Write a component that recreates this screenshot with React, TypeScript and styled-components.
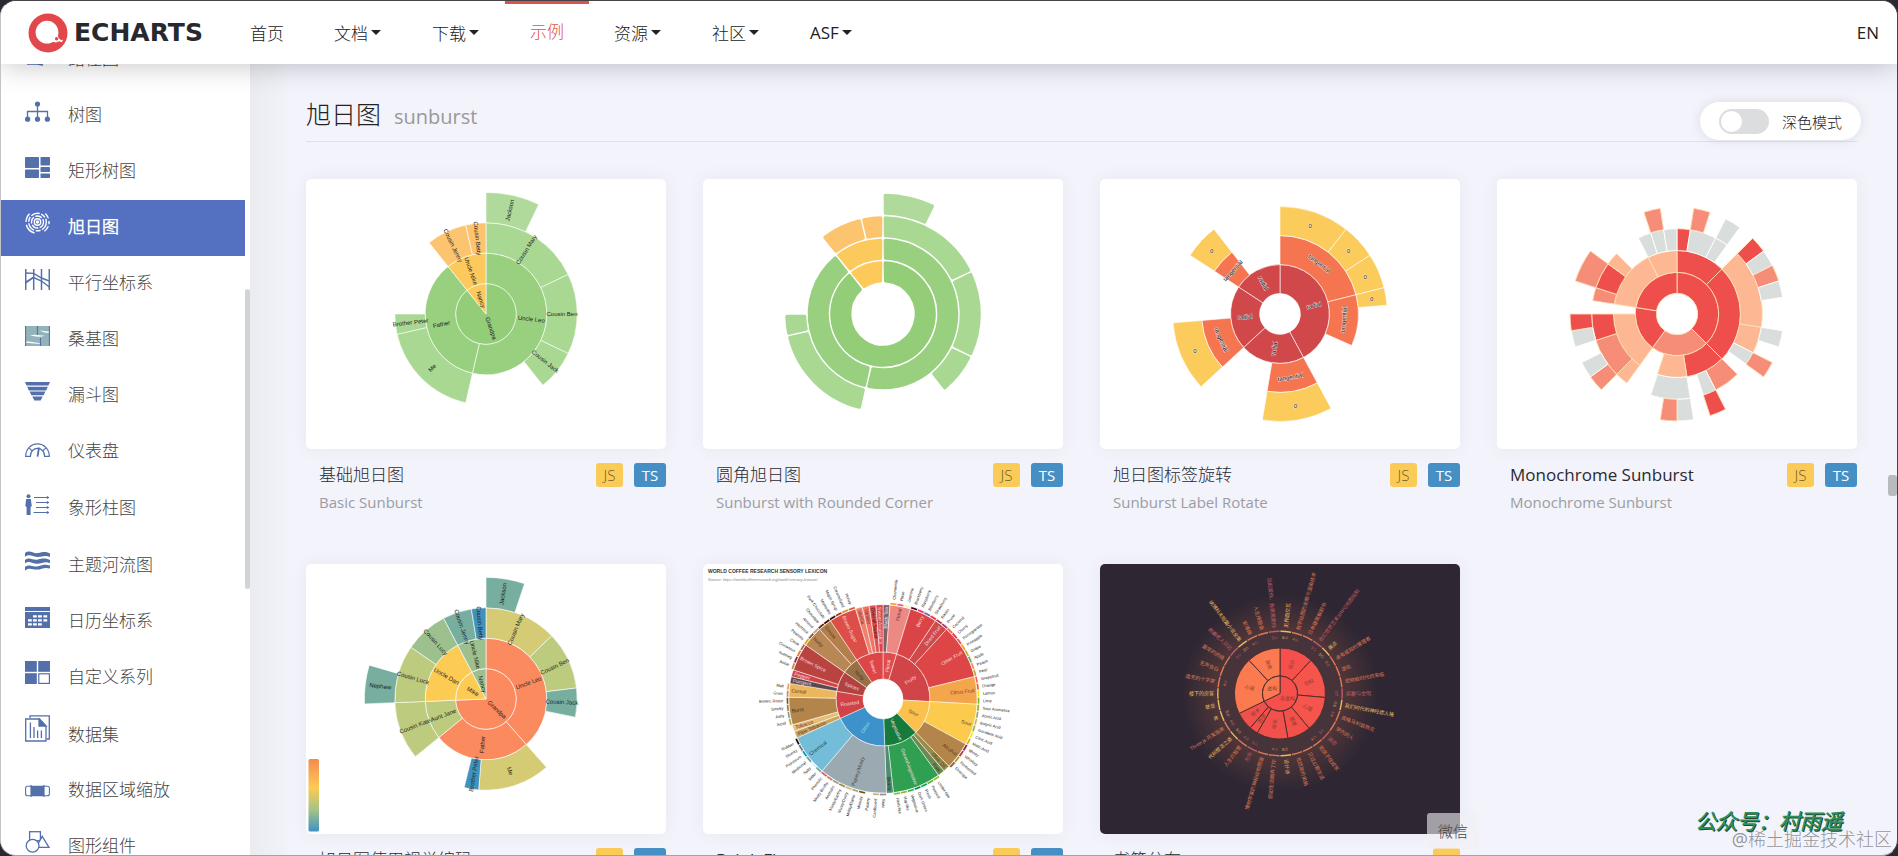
import React from 'react';
import styled, { createGlobalStyle, css } from 'styled-components';

const FONT = '"Open Sans", "Noto Sans CJK SC Light", "Noto Sans CJK SC", sans-serif';
const CHART_FONT = '"Liberation Sans", "Noto Sans CJK SC", sans-serif';

const GlobalStyle = createGlobalStyle`
  *, *::before, *::after { box-sizing: border-box; }
  body { margin: 0; background: #2b2830; font-family: ${FONT}; color: #2c343c; }
  a { color: inherit; text-decoration: none; }
  h1, h2, h3, p { margin: 0; font-weight: 400; }
`;

/* ---------- sunburst drawing ---------- */

type Node = { n?: string; v?: number; f?: string; lab?: string; c?: Node[] };
type Arc = { d: number; a: number; b: number; node: Node; root: number };

const valueOf = (x: Node): number => x.v ?? (x.c ?? []).reduce((s, k) => s + valueOf(k), 0);

function layout(data: Node[]): Arc[] {
  const unit = 360 / data.reduce((s, x) => s + valueOf(x), 0);
  const out: Arc[] = [];
  const walk = (list: Node[], start: number, d: number, root: number) => {
    let a = start;
    list.forEach((node, i) => {
      const b = a + valueOf(node) * unit;
      const r = d === 0 ? i : root;
      out.push({ d, a, b, node, root: r });
      if (node.c) walk(node.c, a, d + 1, r);
      a = b;
    });
  };
  walk(data, 0, 0, 0);
  return out;
}

const CX = 180;
const point = (r: number, deg: number, cy = 135): [number, number] => {
  const t = (deg * Math.PI) / 180;
  return [CX + r * Math.sin(t), cy - r * Math.cos(t)];
};
const str = (p: [number, number]) => `${p[0].toFixed(2)} ${p[1].toFixed(2)}`;

function sector(r0: number, r1: number, a: number, b: number, cy = 135, inset = 0) {
  const i0 = inset ? (inset / r0) * (180 / Math.PI) : 0;
  const i1 = inset ? (inset / r1) * (180 / Math.PI) : 0;
  const q0 = r0 + inset;
  const q1 = r1 - inset;
  const large = b - a > 180 ? 1 : 0;
  const outer = `M${str(point(q1, a + i1, cy))}A${q1} ${q1} 0 ${large} 1 ${str(point(q1, b - i1, cy))}`;
  if (r0 === 0) return `${outer}L${CX} ${cy}Z`;
  return `${outer}L${str(point(q0, b - i0, cy))}A${q0} ${q0} 0 ${large} 0 ${str(point(q0, a + i0, cy))}Z`;
}

const ChartSvg = styled.svg`
  display: block;
  width: 100%;
  height: auto;
  font-family: ${CHART_FONT};
`;

type LabelProps = {
  r: number;
  deg: number;
  size: number;
  fill: string;
  text: string;
  mode?: 'radial' | 'tangential' | 'flat';
  place?: 'middle' | 'out' | 'in';
  cy?: number;
  halo?: boolean;
};

function Label({ r, deg, size, fill, text, mode = 'radial', place = 'middle', cy = 135, halo }: LabelProps) {
  const [x, y] = point(r, deg, cy);
  let rot = 0;
  if (mode === 'radial') rot = deg <= 180 ? deg - 90 : deg + 90;
  if (mode === 'tangential') rot = deg > 90 && deg < 270 ? deg - 180 : deg;
  const anchor = place === 'middle' ? 'middle' : (place === 'out') === deg <= 180 ? 'start' : 'end';
  return (
    <text
      x={x}
      y={y}
      dy="0.35em"
      fontSize={size}
      fill={fill}
      textAnchor={anchor}
      transform={`rotate(${rot} ${x} ${y})`}
      stroke={halo ? '#fff' : undefined}
      strokeWidth={halo ? 1 : undefined}
      strokeOpacity={halo ? 0.6 : undefined}
      paintOrder="stroke"
    >
      {text}
    </text>
  );
}

/* family tree, plain and rounded */

const FAMILY: Node[] = [
  {
    n: 'Grandpa',
    c: [
      {
        n: 'Uncle Leo',
        v: 15,
        c: [
          { n: 'Cousin Mary', v: 5, c: [{ n: 'Jackson', v: 2 }] },
          { n: 'Cousin Ben', v: 4 },
          { n: 'Cousin Jack', v: 2 },
        ],
      },
      { n: 'Father', v: 10, c: [{ n: 'Me', v: 5 }, { n: 'Brother Peter', v: 1 }] },
    ],
  },
  { n: 'Nancy', c: [{ n: 'Uncle Nike', c: [{ n: 'Cousin Jenny', v: 2 }, { n: 'Cousin Betty', v: 1 }] }] },
];
const FAMILY_COLORS = [
  ['#93cd77', '#99d07f', '#a9d892', '#b0da9b'],
  ['#fcc95a', '#fcc95d', '#fdc470', '#fdc470'],
];

function BasicSunburst() {
  const step = 30.4;
  const arcs = layout(FAMILY);
  return (
    <ChartSvg viewBox="0 0 360 270" role="img" aria-label="Basic Sunburst">
      {arcs.map((s, i) => (
        <path key={i} d={sector(s.d * step, (s.d + 1) * step, s.a, s.b)} fill={FAMILY_COLORS[s.root][s.d]} stroke="#fff" strokeWidth={0.6} />
      ))}
      {arcs.map((s, i) => (
        <Label key={i} r={(s.d + 0.5) * step} deg={(s.a + s.b) / 2} size={6} fill="#222" text={s.node.n!} />
      ))}
    </ChartSvg>
  );
}

function RoundedSunburst() {
  const step = 22.5;
  return (
    <ChartSvg viewBox="0 0 360 270" role="img" aria-label="Sunburst with Rounded Corner">
      {layout(FAMILY).map((s, i) => {
        const color = FAMILY_COLORS[s.root][s.d];
        return (
          <path
            key={i}
            d={sector(31 + s.d * step, 31 + (s.d + 1) * step, s.a, s.b, 135, 2.4)}
            fill={color}
            stroke={color}
            strokeWidth={3.4}
            strokeLinejoin="round"
          />
        );
      })}
    </ChartSvg>
  );
}

/* label rotation */

const ROTATE: Node[] = [
  {
    v: 8,
    c: [
      { v: 4, c: [{ v: 2 }, { v: 1 }, { v: 1 }] },
      { v: 2, c: [{ v: 0.5 }] },
    ],
  },
  { v: 4, c: [{ v: 2, c: [{ v: 2 }] }] },
  { v: 4, c: [{ v: 2, c: [{ v: 2 }] }] },
  { v: 3, c: [{ v: 1, c: [{ v: 1 }] }] },
];

function RotateSunburst() {
  const colors = ['#d0484a', '#f57551', '#fbcb5b'];
  const arcs = layout(ROTATE);
  return (
    <ChartSvg viewBox="0 0 360 270" role="img" aria-label="Sunburst Label Rotate">
      {arcs.map((s, i) => (
        <path key={i} d={sector(20.4 + s.d * 29, 49.4 + s.d * 29, s.a, s.b)} fill={colors[s.d]} stroke="#fff" strokeWidth={0.6} />
      ))}
      {arcs.map((s, i) => (
        <Label
          key={i}
          r={35 + s.d * 29}
          deg={(s.a + s.b) / 2}
          size={6}
          fill="#222"
          halo
          mode={(['radial', 'tangential', 'flat'] as const)[s.d]}
          text={['radial', 'tangential', '0'][s.d]}
        />
      ))}
    </ChartSvg>
  );
}

/* monochrome */

const RED = '#ef4f4c';
const SALMON = '#f68d79';
const PEACH = '#fdb893';
const MONO: Node[] = [
  {
    f: RED,
    c: [
      { v: 5, f: RED, c: [{ v: 1, f: RED }, { v: 2, c: [{ v: 1, f: SALMON }] }, { v: 1, c: [{ v: 1 }] }] },
      {
        v: 10,
        f: RED,
        c: [
          { v: 6, f: PEACH, c: [{ v: 1, f: RED }, { v: 1 }, { v: 1, f: SALMON }, { v: 1 }] },
          { v: 2, f: PEACH, c: [{ v: 1 }] },
          { c: [{ v: 1, f: SALMON }] },
        ],
      },
    ],
  },
  {
    v: 9,
    f: SALMON,
    c: [
      { v: 4, f: RED, c: [{ v: 2, f: SALMON }, { c: [{ v: 1, f: RED }] }] },
      { f: PEACH, c: [{ v: 3, c: [{ v: 1 }, { v: 1, f: SALMON }] }] },
    ],
  },
  {
    v: 7,
    f: RED,
    c: [
      {
        f: PEACH,
        c: [
          { v: 1, f: PEACH },
          { v: 3, f: SALMON, c: [{ v: 1, f: SALMON }, { v: 1 }] },
          { v: 2, f: RED, c: [{ v: 1 }, { v: 1, f: RED }] },
        ],
      },
    ],
  },
  {
    f: RED,
    c: [
      { v: 6, f: PEACH, c: [{ v: 1, f: SALMON }, { v: 2, f: RED, c: [{ v: 2, f: SALMON }] }, { v: 1, f: PEACH }] },
      { v: 3, f: PEACH, c: [{ v: 1 }, { c: [{ v: 1, f: SALMON }] }, { v: 1 }] },
    ],
  },
];

function MonochromeSunburst() {
  const r = [20.7, 41.7, 63.5, 85.3, 107];
  return (
    <ChartSvg viewBox="0 0 360 270" role="img" aria-label="Monochrome Sunburst">
      {layout(MONO).map((s, i) => (
        <path
          key={i}
          d={sector(r[s.d], r[s.d + 1], s.a, s.b)}
          fill={s.node.f ?? '#d9dedd'}
          stroke={s.node.f ? '#fde0b8' : '#fff'}
          strokeWidth={0.9}
        />
      ))}
    </ChartSvg>
  );
}

/* visual encoding */

const VALUE_COLORS: Record<number, string> = {
  1: '#3f92bd', 2: '#77ae9f', 3: '#9cc18f', 4: '#bccb7d', 5: '#d5cb74', 7: '#fccb54', 10: '#fb8a5f',
};
const KIN: Node[] = [
  {
    n: 'Grandpa',
    c: [
      FAMILY[0].c![0],
      { n: 'Father', v: 10, c: [{ n: 'Me', v: 5 }, { n: 'Brother Peter', v: 1 }] },
      { n: 'Aunt Jane', c: [{ n: 'Cousin Kate', v: 4 }] },
    ],
  },
  {
    n: 'Mike',
    c: [{ n: 'Uncle Dan', c: [{ n: 'Cousin Luck', v: 4, c: [{ n: 'Nephew', v: 2 }] }, { n: 'Cousin Lucy', v: 3 }] }],
  },
  FAMILY[1],
];

function VisualMapSunburst() {
  const step = 30.4;
  const arcs = layout(KIN);
  return (
    <ChartSvg viewBox="0 0 360 270" role="img" aria-label="Sunburst VisualMap">
      <defs>
        <linearGradient id="scale" x1="0" y1="0" x2="0" y2="1">
          <stop offset="0" stopColor="#f58a52" />
          <stop offset="0.4" stopColor="#fbcb52" />
          <stop offset="0.7" stopColor="#a5c388" />
          <stop offset="1" stopColor="#3f92c4" />
        </linearGradient>
      </defs>
      {arcs.map((s, i) => (
        <path
          key={i}
          d={sector(s.d * step, (s.d + 1) * step, s.a, s.b)}
          fill={VALUE_COLORS[Math.min(10, valueOf(s.node))]}
          stroke="#fff"
          strokeWidth={0.6}
        />
      ))}
      {arcs.map((s, i) => (
        <Label key={i} r={(s.d + 0.5) * step} deg={(s.a + s.b) / 2} size={6} fill="#222" text={s.node.n!} />
      ))}
      <rect x="2.5" y="195" width="10.5" height="72.5" rx="1.5" fill="url(#scale)" />
    </ChartSvg>
  );
}

/* coffee flavours */

const leaves = (names: string, colors: string): Node[] => {
  const fills = colors.split(' ');
  return names.split('|').map((n, i) => ({ n, v: 1, f: fills[i % fills.length] }));
};

const FLAVORS: Node[] = [
  {
    n: 'Floral', f: '#de4c4b',
    c: [
      { n: 'Black Tea', v: 1, f: '#7d6168', lab: '#eee' },
      { n: 'Floral', f: '#ec8983', lab: '#733', c: leaves('Chamomile|Rose|Jasmine', '#f99e1c #ef5a78 #f7f1bd') },
    ],
  },
  {
    n: 'Fruity', f: '#d14548',
    c: [
      { n: 'Berry', f: '#db4446', c: leaves('Blackberry|Raspberry|Blueberry|Strawberry', '#3e0317 #e62969 #6569b0 #ef2d36') },
      { n: 'Dried Fruit', f: '#cf4a48', c: leaves('Raisin|Prune', '#b53b54 #a5446f') },
      {
        n: 'Other Fruit', f: '#dd4547',
        c: leaves('Coconut|Cherry|Pomegranate|Pineapple|Grape|Apple|Peach|Pear', '#f2684b #e73451 #e65656 #f89a1c #aeb92c #4eb849 #f68a5c #baa635'),
      },
      { n: 'Citrus Fruit', f: '#f3a64c', lab: '#933', c: leaves('Grapefruit|Orange|Lemon|Lime', '#f26355 #e2631e #fde404 #7eb138') },
    ],
  },
  {
    n: 'Sour', f: '#fbc14c', lab: '#643',
    c: [
      {
        n: 'Sour', f: '#fccb4e', lab: '#643',
        c: leaves('Sour Aromatics|Acetic Acid|Butyric Acid|Isovaleric Acid|Citric Acid|Malic Acid', '#9ea718 #94a76f #d0b24f #8eb646 #faef07 #c1ba07'),
      },
      { n: 'Alcohol', f: '#b3854a', lab: '#532', c: leaves('Winey|Whiskey|Fermented|Overripe', '#8f1c53 #b34039 #ba9232 #8b6439') },
    ],
  },
  {
    n: 'Vegetative', f: '#157a3c',
    c: [
      { n: 'Olive Oil', v: 1, f: '#9a8a4c', lab: '#343' },
      { n: 'Raw', v: 1, f: '#6b8a50', lab: '#343' },
      {
        n: 'Green/Vegetative', f: '#2f9f52',
        c: leaves('Under-ripe|Peapod|Fresh|Dark Green|Vegetative|Hay-like|Herb-like', '#a2bb2b #62aa3c #03a653 #038549 #28b44b #a3a830 #7ac141'),
      },
      { n: 'Beany', v: 1, f: '#4f8d72', lab: '#232' },
    ],
  },
  {
    n: 'Other', f: '#3d92cb', lab: '#7fe0e8',
    c: [
      {
        n: 'Papery/Musty', f: '#9ba9b1', lab: '#444',
        c: leaves(
          'Stale|Cardboard|Papery|Woody|Moldy/Damp|Musty/Dusty|Musty/Earthy|Animalic|Meaty Brothy|Phenolic',
          '#8b8c90 #beb276 #fefef4 #744e03 #a3a36f #c9b583 #978847 #9d977f #cc7b6a #db646a',
        ),
      },
      { n: 'Chemical', f: '#73bdd8', lab: '#246', c: leaves('Bitter|Salty|Medicinal|Petroleum|Skunky|Rubber', '#80a89d #def2fd #7a9bae #039fb8 #5e777b #120c0c') },
    ],
  },
  {
    n: 'Roasted', f: '#d14347',
    c: [
      { n: 'Pipe Tobacco', v: 1, f: '#caa45c', lab: '#533' },
      { n: 'Tobacco', v: 1, f: '#e5bd74', lab: '#533' },
      { n: 'Burnt', f: '#b3854a', lab: '#432', c: leaves('Acrid|Ashy|Smoky|Brown, Roast', '#b9a449 #899893 #a1743b #894810') },
      { n: 'Cereal', f: '#ebb65c', lab: '#533', c: leaves('Grain|Malt', '#b7906f #eb9d5f') },
    ],
  },
  {
    n: 'Spices', f: '#b2423f',
    c: [
      { n: 'Pungent', v: 1, f: '#5b4a4c' },
      { n: 'Pepper', v: 1, f: '#d14347' },
      { n: 'Brown Spice', f: '#b8433f', c: leaves('Anise|Nutmeg|Cinnamon|Clove', '#c78936 #8c292c #e5762e #a16c5a') },
    ],
  },
  {
    n: 'Nutty', f: '#987048', lab: '#432',
    c: [
      { n: 'Nutty', f: '#b98756', lab: '#532', c: leaves('Peanuts|Hazelnut|Almond', '#d4ad12 #9d5433 #c89f83') },
      { n: 'Cocoa', f: '#b57f4c', lab: '#532', c: leaves('Chocolate|Dark Chocolate', '#692a19 #470604') },
    ],
  },
  {
    n: 'Sweet', f: '#dd4547',
    c: [
      { n: 'Brown Sugar', f: '#dc4e48', c: leaves('Molasses|Maple Syrup|Caramelized|Honey', '#310d0f #ae341f #d78823 #da5c1f') },
      { n: 'Vanilla', v: 1, f: '#f0816f', lab: '#733' },
      { n: 'Vanillin', v: 1, f: '#ee7468', lab: '#733' },
      { n: 'Overall Sweet', v: 1, f: '#e0504c', lab: '#411' },
      { n: 'Sweet Aromatics', v: 1, f: '#dc4547' },
    ],
  },
];

function FlavorSunburst() {
  const rings = [[20, 47], [47, 94.3], [94.3, 96.8]];
  const arcs = layout(FLAVORS);
  return (
    <ChartSvg viewBox="0 0 360 270" role="img" aria-label="Drink Flavors">
      <text x="5" y="9" fontSize="5" fontWeight="700" fill="#333">WORLD COFFEE RESEARCH SENSORY LEXICON</text>
      <text x="5" y="17" fontSize="4" fontStyle="italic" fill="#888">Source: https://worldcoffeeresearch.org/work/sensory-lexicon/</text>
      {arcs.map((s, i) => (
        <path key={i} d={sector(rings[s.d][0], rings[s.d][1], s.a, s.b)} fill={s.node.f} stroke="#fff" strokeWidth={s.d === 2 ? 0.8 : 0.5} />
      ))}
      {arcs.map((s, i) => {
        const mid = (s.a + s.b) / 2;
        if (s.d === 2) return <Label key={i} r={100} deg={mid} size={4} fill="#222" text={s.node.n!} place="out" />;
        if (s.d === 1) return <Label key={i} r={92} deg={mid} size={5} fill={s.node.lab ?? '#fbdcdc'} text={s.node.n!} place="in" />;
        return <Label key={i} r={33.5} deg={mid} size={5} fill={s.node.lab ?? '#fbdcdc'} text={s.node.n!} />;
      })}
    </ChartSvg>
  );
}

/* book collection */

const BOOK_COLORS: Record<number, string> = { 5: '#ecb862', 4: '#df7a55', 3: '#c45c66' };
const GENRES: [string, number, number, string][] = [
  ['设计', 0, 43, '#f5504c'], ['社科', 43, 95, '#f5554c'], ['心理', 95, 140, '#f5554c'], ['居家', 140, 170, '#f25048'],
  ['绘本', 170, 210, '#f2504c'], ['哲学', 210, 221, '#f2504c'], ['技术', 221, 244, '#f2504c'], ['小说', 244, 317, '#fb7a50'],
  ['其他', 317, 360, '#fb7a50'],
];
const BOOKS: [string, number][] = [
  ['无界面交互', 5], ['数字绘图的光照与渲染技术', 4], ['日本建筑解剖书', 4], ['奇幻世界艺术&RPG地图绘制', 3], ['痛点', 5],
  ['卓有成效的管理者', 4], ['进化', 4], ['后物欲时代的来临', 4], ['疯癫与文明', 3], ['我们时代的神经症人格', 5],
  ['皮格马利翁效应', 4], ['受伤的人', 4], ['迷恋', 3], ['把房子住成家', 4], ['只过必要生活', 4], ['北欧简约风格', 4],
  ['设计诗', 5], ['假如生活糊弄了你', 4], ['博物学家的神秘动物图鉴', 4], ['方向', 3], ['人生的智慧', 4], ['代码整洁之道', 5],
  ['Three.js 开发指南', 4], ['疼', 5], ['慈悲', 5], ['楼下的房客', 5], ['虚无的十字架', 4], ['无声告白', 4], ['童年的终结', 4],
  ['疯癫老人日记', 3], ['纳博科夫短篇小说全集', 5], ['安魂曲', 4], ['人生拼图版', 4], ['比起爱你，我更需要你', 3],
];

function BookSunburst() {
  const cy = 129.5;
  const unit = 360 / BOOKS.length;
  return (
    <ChartSvg viewBox="0 0 360 270" role="img" aria-label="Book Records">
      <defs>
        <radialGradient id="glow" cx="0.5" cy="0.5" r="0.5">
          <stop offset="0.6" stopColor="#d9714f" stopOpacity="0.22" />
          <stop offset="1" stopColor="#d9714f" stopOpacity="0" />
        </radialGradient>
      </defs>
      <rect width="360" height="270" fill="#2e2733" />
      <circle cx={CX} cy={cy} r="98" fill="url(#glow)" />
      <circle cx={CX} cy={cy} r="62" fill="#46343a" />
      {BOOKS.map(([name, stars], i) => {
        const a = i * unit;
        const mid = a + unit / 2;
        return (
          <g key={name}>
            <path d={sector(61.5, 62.9, a + 0.4, a + unit - 0.4, cy)} fill={BOOK_COLORS[stars]} />
            <Label r={66} deg={mid} size={5} fill={BOOK_COLORS[stars]} text={name} place="out" cy={cy} />
            {(i === 0 || BOOKS[i - 1][1] !== stars) && (
              <Label r={56} deg={mid} size={4} fill={BOOK_COLORS[stars]} text={`${stars}☆`} mode="tangential" cy={cy} />
            )}
          </g>
        );
      })}
      {GENRES.map(([name, a, b, fill]) => (
        <g key={name}>
          <path d={sector(17.7, 45.5, a, b, cy)} fill={fill} stroke="#4a2b30" strokeWidth={0.9} />
          <Label r={31} deg={(a + b) / 2} size={5} fill="#8a3a2c" text={name} cy={cy} />
        </g>
      ))}
      <path d={sector(0, 17.5, 0, 244, cy)} fill="#f5504c" stroke="#4a2b30" strokeWidth={0.9} />
      <path d={sector(0, 17.5, 244, 360, cy)} fill="#fb7a50" stroke="#4a2b30" strokeWidth={0.9} />
      <Label r={9} deg={122} size={5} fill="#8a3a2c" text="非虚构" mode="flat" cy={cy} />
      <Label r={9} deg={302} size={5} fill="#8a3a2c" text="虚构" mode="flat" cy={cy} />
    </ChartSvg>
  );
}

/* ---------- sidebar icons ---------- */

const BLUE = '#5470ab';

const icons: Record<string, { h: number; art: React.ReactNode }> = {
  lines: {
    h: 16,
    art: <path d="M2 14H12L18 15" fill="none" stroke={BLUE} strokeWidth="1.5" />,
  },
  tree: {
    h: 21,
    art: (
      <>
        <path d="M12.5 3V18M2.5 17V10.5H22.5V17" fill="none" stroke={BLUE} strokeWidth="1.3" />
        <circle cx="12.5" cy="3" r="2.6" fill={BLUE} />
        <circle cx="2.6" cy="18.2" r="2.6" fill={BLUE} />
        <circle cx="12.5" cy="18.2" r="2.6" fill={BLUE} />
        <circle cx="22.4" cy="18.2" r="2.6" fill={BLUE} />
      </>
    ),
  },
  treemap: {
    h: 21,
    art: (
      <g fill={BLUE}>
        <rect width="14" height="11" rx="0.8" />
        <rect y="12.5" width="14" height="8.5" rx="0.8" />
        <rect x="15.5" width="9.5" height="8.5" rx="0.8" />
        <rect x="15.5" y="10" width="9.5" height="5" rx="0.8" />
        <rect x="15.5" y="16.5" width="9.5" height="4.5" rx="0.8" />
      </g>
    ),
  },
  sunburst: {
    h: 23,
    art: (
      <g fill="none" stroke="#fff" strokeWidth="1.4">
        <circle cx="12.5" cy="11" r="1" fill="#fff" />
        <circle cx="12.5" cy="11" r="3.2" />
        <circle cx="12.5" cy="11" r="6" strokeDasharray="7 1.4" />
        <circle cx="12.5" cy="11" r="8.8" strokeDasharray="9 1.6 5 1.6" />
        <path d="M1 11A11.5 11.5 0 0 1 4.6 2.8M1.3 13.8A11.5 11.5 0 0 0 9.5 22M20.3 2.6A11.5 11.5 0 0 1 23.4 7.4M24 10V13.2M23.3 15.2A11.5 11.5 0 0 1 19.4 20.2" />
      </g>
    ),
  },
  parallel: {
    h: 21,
    art: (
      <g fill="none" stroke={BLUE} strokeWidth="1.1">
        <path d="M.7 0V21M8.7 0V21M16.5 0V21M24.3 0V21" strokeWidth="1.5" />
        <path d="M.7 4L8.7 4.4L16.5 9L24.3 12M.7 14L8.7 8.5L16.5 12L24.3 18M.7 13L8.7 8" strokeWidth="1.4" />
      </g>
    ),
  },
  sankey: {
    h: 20,
    art: (
      <>
        <rect x="0.5" width="24" height="20" fill="#93b3ba" />
        <path d="M5 9.2C9 8 14 9 20 9.8C15 11.4 9 10.6 5 9.2M15 4.6C18 5 21 5.6 24 5.4V7C20 7 17 6 15 4.6" fill="#fff" />
        <path d="M1 15.6C8 15.6 10 17 16 17.4C11 18.4 6 16.8 1 16.8Z" fill="#fff" />
        <path d="M.6 0V20M12.4 0V9M15.5 12V20M24.4 0V20" stroke={BLUE} strokeWidth="1.1" />
      </>
    ),
  },
  funnel: {
    h: 21,
    art: <path d="M0 1H25L23.4 4.6H1.6ZM2.2 5.8H22.8L21.2 9.4H3.8ZM4.6 10.6H20.4L18.6 14.2H6.4ZM7.2 15.4H17.8L15.6 19.4H9.4Z" fill={BLUE} />,
  },
  gauge: {
    h: 15,
    art: (
      <g fill="none" stroke={BLUE} strokeWidth="1.2">
        <path d="M.7 13.4C.7 6 6 .8 12.5 .8S24.3 6 24.3 13.4H19.6C19.6 8.4 16.4 5.4 12.5 5.4S5.4 8.4 5.4 13.4Z" />
        <path d="M4 4.8L7.4 8.2M21 4.8L17.6 8.2" />
        <path d="M14 4.5L12.5 13.6" strokeWidth="1.8" />
      </g>
    ),
  },
  pictorial: {
    h: 21,
    art: (
      <>
        <circle cx="3.5" cy="2.2" r="2" fill={BLUE} />
        <path d="M1.2 5H5.8L6.8 12L5.6 13V21H1.6V13L.3 12Z" fill={BLUE} />
        <path d="M9 3.5H24M11 8.5H24M11 13.5H24M8.5 18.5H24" stroke={BLUE} strokeWidth="1.1" />
        <path d="M22.5 2.2V4.8M22.5 7.2V9.8M22.5 12.2V14.8M22.5 17.2V19.8" stroke={BLUE} strokeWidth="1.4" />
      </>
    ),
  },
  river: {
    h: 21,
    art: (
      <path
        d="M0 2C5 -2 8 3 13 2S20 0 25 2.4V6C19 3.6 17 6.4 12 6S5 2.4 0 5.8ZM0 9C5 5.4 8 10 13 8.6S20 7 25 9V12C19 10 17 13 12 12.8S5 9 0 12.2ZM0 15.8C5 12.4 8 16.6 13 15.2S20 13 25 14.6V17.6C19 15.6 17 18.6 12 18.6S5 16 0 19.4Z"
        fill={BLUE}
      />
    ),
  },
  calendar: {
    h: 21,
    art: (
      <>
        <path d="M0 0H25V4H0ZM0 5H25V21H0Z" fill={BLUE} />
        <path
          d="M8 8.2h3.8v2.2H8zM13 8.2h3.8v2.2H13zM18.4 8.2h3.8v2.2H18.4zM3 12.2h3.8v2.2H3zM8 12.2h3.8v2.2H8zM13 12.2h3.8v2.2H13zM18.4 12.2h3.8v2.2H18.4zM3 16.2h3.8v2.2H3zM8 16.2h3.8v2.2H8zM13 16.2h3.8v2.2H13z"
          fill="#fff"
        />
      </>
    ),
  },
  custom: {
    h: 23,
    art: (
      <g fill={BLUE}>
        <rect width="11.8" height="10.8" />
        <rect x="13.2" width="11.8" height="10.8" />
        <rect y="12.2" width="11.8" height="10.8" />
        <rect x="13.8" y="12.8" width="10.6" height="9.6" fill="none" stroke={BLUE} strokeWidth="1.2" />
      </g>
    ),
  },
  dataset: {
    h: 27,
    art: (
      <g fill="none" stroke={BLUE} strokeWidth="1.3">
        <path d="M5 3V.8H24.3V24H21.4" />
        <path d="M.7 4H14.5L21 11V26H.7Z" />
        <path d="M14 4V11H21Z" fill={BLUE} />
        <path d="M5.4 7.5V23M9 12V23M12.6 15.5V23M16.4 15.5V23" />
      </g>
    ),
  },
  zoom: {
    h: 12,
    art: (
      <>
        <rect x="0.6" y="1.2" width="23.8" height="9.6" rx="2" fill="none" stroke={BLUE} strokeWidth="1.1" />
        <rect x="6" y="1" width="13" height="10" fill={BLUE} />
        <path d="M6 0V12M19 0V12" stroke={BLUE} strokeWidth="1.2" />
      </>
    ),
  },
  graphic: {
    h: 22,
    art: (
      <g fill="#fff" stroke={BLUE} strokeWidth="1.3">
        <rect x="4.6" y="0.7" width="10.8" height="9" />
        <path d="M17.2 5.4L24 16.4H11Z" />
        <circle cx="7.6" cy="14.8" r="6.4" />
      </g>
    ),
  },
};

/* ---------- page parts ---------- */

const Window = styled.div`
  position: relative;
  display: flex;
  flex-direction: column;
  height: 100vh;
  overflow: hidden;
  border: 1px solid #454348;
  border-left-color: #c4c4c8;
  border-bottom-color: #a2a2ae;
  border-radius: 16px;
  background: #f2f3fb;
`;

const Header = styled.header`
  position: relative;
  z-index: 2;
  flex: none;
  display: flex;
  align-items: stretch;
  height: 63px;
  padding: 0 18px 0 27px;
  background: #fff;
  box-shadow: 0 0 30px rgba(0, 0, 0, 0.25);
`;

const Brand = styled.a`
  display: flex;
  align-items: center;
  gap: 6px;
  width: 197px;
  font: 700 25px "DejaVu Sans", sans-serif;
  color: #28292e;
`;

const Nav = styled.nav`
  display: flex;
  flex: 1;
`;

const NavLink = styled.a<{ $active?: boolean }>`
  display: flex;
  align-items: center;
  gap: 3px;
  padding: 0 25px;
  border-top: 0 solid #d6554f;
  font-size: 17px;
  color: #222;
  ${(p) =>
    p.$active &&
    css`
      padding-bottom: 8px;
      border-top-width: 3px;
      color: #e0523f;
    `}
`;

const LanguageLink = styled.a`
  align-self: center;
  font-size: 17px;
  color: #222;
`;

const Caret = styled.span`
  width: 10px;
  margin-right: 1px;
  border: 5px solid transparent;
  border-top-color: currentColor;
  border-bottom: 0;
`;

const Body = styled.div`
  flex: 1;
  min-height: 0;
  display: flex;
`;

const Sidebar = styled.aside`
  position: relative;
  flex: none;
  width: 249px;
  overflow: hidden;
  padding-right: 5px;
  background: #fff;
`;

const SideShade = styled.div`
  flex: none;
  width: 40px;
  margin-right: -40px;
  background: linear-gradient(to right, #ebecf0, #f2f3fb00);
`;

const ChartList = styled.ul`
  margin: -32px 0 0;
  padding: 0;
  list-style: none;
`;

const ChartLink = styled.a<{ $height?: number; $active?: boolean }>`
  display: flex;
  align-items: flex-end;
  gap: 18px;
  height: ${(p) => p.$height ?? 56}px;
  padding: 0 0 17px 24px;
  font-size: 17px;
  line-height: 24px;
  color: #444;
  ${(p) =>
    p.$active &&
    css`
      background: #5470c0;
      color: #fff;
      font-weight: 700;
    `}

  svg {
    flex: none;
    margin-bottom: 5px;
  }
`;

const Thumb = styled.div<{ $page?: boolean }>`
  position: absolute;
  right: 0;
  top: ${(p) => (p.$page ? 474 : 225)}px;
  width: ${(p) => (p.$page ? 9 : 5)}px;
  height: ${(p) => (p.$page ? 21 : 300)}px;
  border-radius: 3px;
  background: ${(p) => (p.$page ? '#b9babd' : '#d2d3d3')};
`;

const Main = styled.main`
  flex: 1;
  min-width: 0;
  overflow: hidden;
  padding: 30px 40px 0 56px;
`;

const Heading = styled.div`
  position: relative;
  display: flex;
  align-items: baseline;
  gap: 13px;
  height: 48px;
  border-bottom: 1px solid #dfe1e8;
`;

const Title = styled.h1`
  font-size: 25px;
  line-height: 40px;
  color: #222;
`;

const Sub = styled.span`
  font-size: 20px;
  color: #999;
`;

const DarkToggle = styled.label`
  position: absolute;
  right: -4px;
  bottom: 1px;
  display: flex;
  align-items: center;
  gap: 13px;
  height: 38px;
  padding: 0 19px;
  border-radius: 19px;
  background: #fff;
  box-shadow: 0 0 12px rgba(0, 0, 0, 0.1);
  font-size: 15px;
  color: #222;
`;

const Switch = styled.input`
  appearance: none;
  width: 50px;
  height: 25px;
  margin: 0;
  padding: 2px;
  border-radius: 13px;
  background: #dcddde;

  &::before {
    content: '';
    display: block;
    width: 21px;
    height: 21px;
    border-radius: 50%;
    background: #fff;
  }
  &:checked {
    background: #5470c0;
  }
  &:checked::before {
    margin-left: auto;
  }
`;

const Grid = styled.div`
  display: grid;
  grid-template-columns: repeat(4, minmax(0, 1fr));
  gap: 51px 37px;
  padding-top: 37px;
`;

const Card = styled.a`
  display: block;
`;

const Thumbnail = styled.div`
  overflow: hidden;
  border-radius: 5px;
  background: #fff;
  box-shadow: 0 0 20px rgba(0, 0, 0, 0.05);
`;

const Caption = styled.div`
  display: flex;
  align-items: center;
  gap: 11px;
  padding: 14px 0 0 13px;
`;

const CardTitle = styled.h2`
  flex: 1;
  font-size: 17px;
  line-height: 24px;
  color: #2a2a30;
`;

const CardSub = styled.p`
  padding: 4px 0 0 13px;
  font-size: 15px;
  line-height: 22px;
  color: #9b9da3;
`;

const Badge = styled.span<{ $kind: 'JS' | 'TS' }>`
  width: ${(p) => (p.$kind === 'JS' ? 27 : 32)}px;
  border-radius: 3px;
  background: ${(p) => (p.$kind === 'JS' ? '#fbcb58' : '#458fc4')};
  color: ${(p) => (p.$kind === 'JS' ? '#6b5a2c' : '#fff')};
  font-size: 15px;
  font-weight: ${(p) => (p.$kind === 'JS' ? 300 : 400)};
  line-height: 24px;
  text-align: center;
`;

const Tooltip = styled.div`
  position: absolute;
  right: 418px;
  bottom: 6px;
  padding: 6px 11px;
  border-radius: 3px;
  background: rgba(240, 240, 244, 0.6);
  font-size: 15px;
  line-height: 24px;
  color: #444;
`;

const AccountMark = styled.div`
  position: absolute;
  right: 55px;
  bottom: 20px;
  font-size: 21px;
  font-style: italic;
  font-weight: 700;
  line-height: 28px;
  color: #2f8f5b;
  text-shadow: 1px 1px 0 #1d4a33;
`;

const SiteMark = styled.div`
  position: absolute;
  right: 5px;
  bottom: 3px;
  font-size: 18px;
  line-height: 26px;
  color: rgba(90, 90, 96, 0.65);
`;

const NAV: { label: string; menu?: boolean; active?: boolean }[] = [
  { label: '首页' },
  { label: '文档', menu: true },
  { label: '下载', menu: true },
  { label: '示例', active: true },
  { label: '资源', menu: true },
  { label: '社区', menu: true },
  { label: 'ASF', menu: true },
];

const SERIES: { label: string; icon: string; height?: number; active?: boolean }[] = [
  { label: '路径图', icon: 'lines' },
  { label: '树图', icon: 'tree' },
  { label: '矩形树图', icon: 'treemap' },
  { label: '旭日图', icon: 'sunburst', active: true },
  { label: '平行坐标系', icon: 'parallel' },
  { label: '桑基图', icon: 'sankey' },
  { label: '漏斗图', icon: 'funnel' },
  { label: '仪表盘', icon: 'gauge' },
  { label: '象形柱图', icon: 'pictorial', height: 57 },
  { label: '主题河流图', icon: 'river', height: 57 },
  { label: '日历坐标系', icon: 'calendar' },
  { label: '自定义系列', icon: 'custom' },
  { label: '数据集', icon: 'dataset', height: 58 },
  { label: '数据区域缩放', icon: 'zoom', height: 55 },
  { label: '图形组件', icon: 'graphic' },
];

const CARDS: { title: string; sub: string; Chart: React.FC; ts?: boolean }[] = [
  { title: '基础旭日图', sub: 'Basic Sunburst', Chart: BasicSunburst, ts: true },
  { title: '圆角旭日图', sub: 'Sunburst with Rounded Corner', Chart: RoundedSunburst, ts: true },
  { title: '旭日图标签旋转', sub: 'Sunburst Label Rotate', Chart: RotateSunburst, ts: true },
  { title: 'Monochrome Sunburst', sub: 'Monochrome Sunburst', Chart: MonochromeSunburst, ts: true },
  { title: '旭日图使用视觉编码', sub: 'Sunburst VisualMap', Chart: VisualMapSunburst, ts: true },
  { title: 'Drink Flavors', sub: 'Drink Flavors', Chart: FlavorSunburst, ts: true },
  { title: '书籍分布', sub: 'Book Records', Chart: BookSunburst },
];

function LogoMark() {
  return (
    <svg width="40" height="40" viewBox="0 0 40 40" aria-hidden="true">
      <circle cx="20" cy="20" r="19.5" fill="#e2484b" />
      <circle cx="19" cy="19.2" r="11.4" fill="#fff" />
      <path d="M23 28.5C26 28.5 28 26.5 28.2 23L29.6 22.8L31 25.6L33.2 27.2L35 26.6L34 29.2L31.4 28.2L28 29.6Z" fill="#fff" />
      <circle cx="28.6" cy="25.8" r="1.7" fill="#e2484b" />
    </svg>
  );
}

export default function App() {
  return (
    <>
      <GlobalStyle />
      <Window>
        <Header>
          <Brand href="#home">
            <LogoMark />
            <span>ECHARTS</span>
          </Brand>
          <Nav>
            {NAV.map((item) => (
              <NavLink key={item.label} href="#nav" $active={item.active}>
                {item.label}
                {item.menu && <Caret />}
              </NavLink>
            ))}
          </Nav>
          <LanguageLink href="#en">EN</LanguageLink>
        </Header>
        <Body>
          <Sidebar>
            <ChartList>
              {SERIES.map((item) => {
                const { h, art } = icons[item.icon];
                return (
                  <li key={item.label}>
                    <ChartLink href="#series" $height={item.height} $active={item.active}>
                      <svg width="25" height={h} viewBox={`0 0 25 ${h}`} aria-hidden="true">
                        {art}
                      </svg>
                      {item.label}
                    </ChartLink>
                  </li>
                );
              })}
            </ChartList>
            <Thumb />
          </Sidebar>
          <SideShade />
          <Main>
            <Heading>
              <Title>旭日图</Title>
              <Sub>sunburst</Sub>
              <DarkToggle>
                <Switch type="checkbox" />
                深色模式
              </DarkToggle>
            </Heading>
            <Grid>
              {CARDS.map(({ title, sub, Chart, ts }) => (
                <Card key={title} href="#example">
                  <Thumbnail>
                    <Chart />
                  </Thumbnail>
                  <Caption>
                    <CardTitle>{title}</CardTitle>
                    <Badge $kind="JS">JS</Badge>
                    {ts && <Badge $kind="TS">TS</Badge>}
                  </Caption>
                  <CardSub>{sub}</CardSub>
                </Card>
              ))}
            </Grid>
          </Main>
        </Body>
        <Thumb $page />
        <Tooltip role="tooltip">微信</Tooltip>
        <AccountMark>公众号：村雨遥</AccountMark>
        <SiteMark>@稀土掘金技术社区</SiteMark>
      </Window>
    </>
  );
}
